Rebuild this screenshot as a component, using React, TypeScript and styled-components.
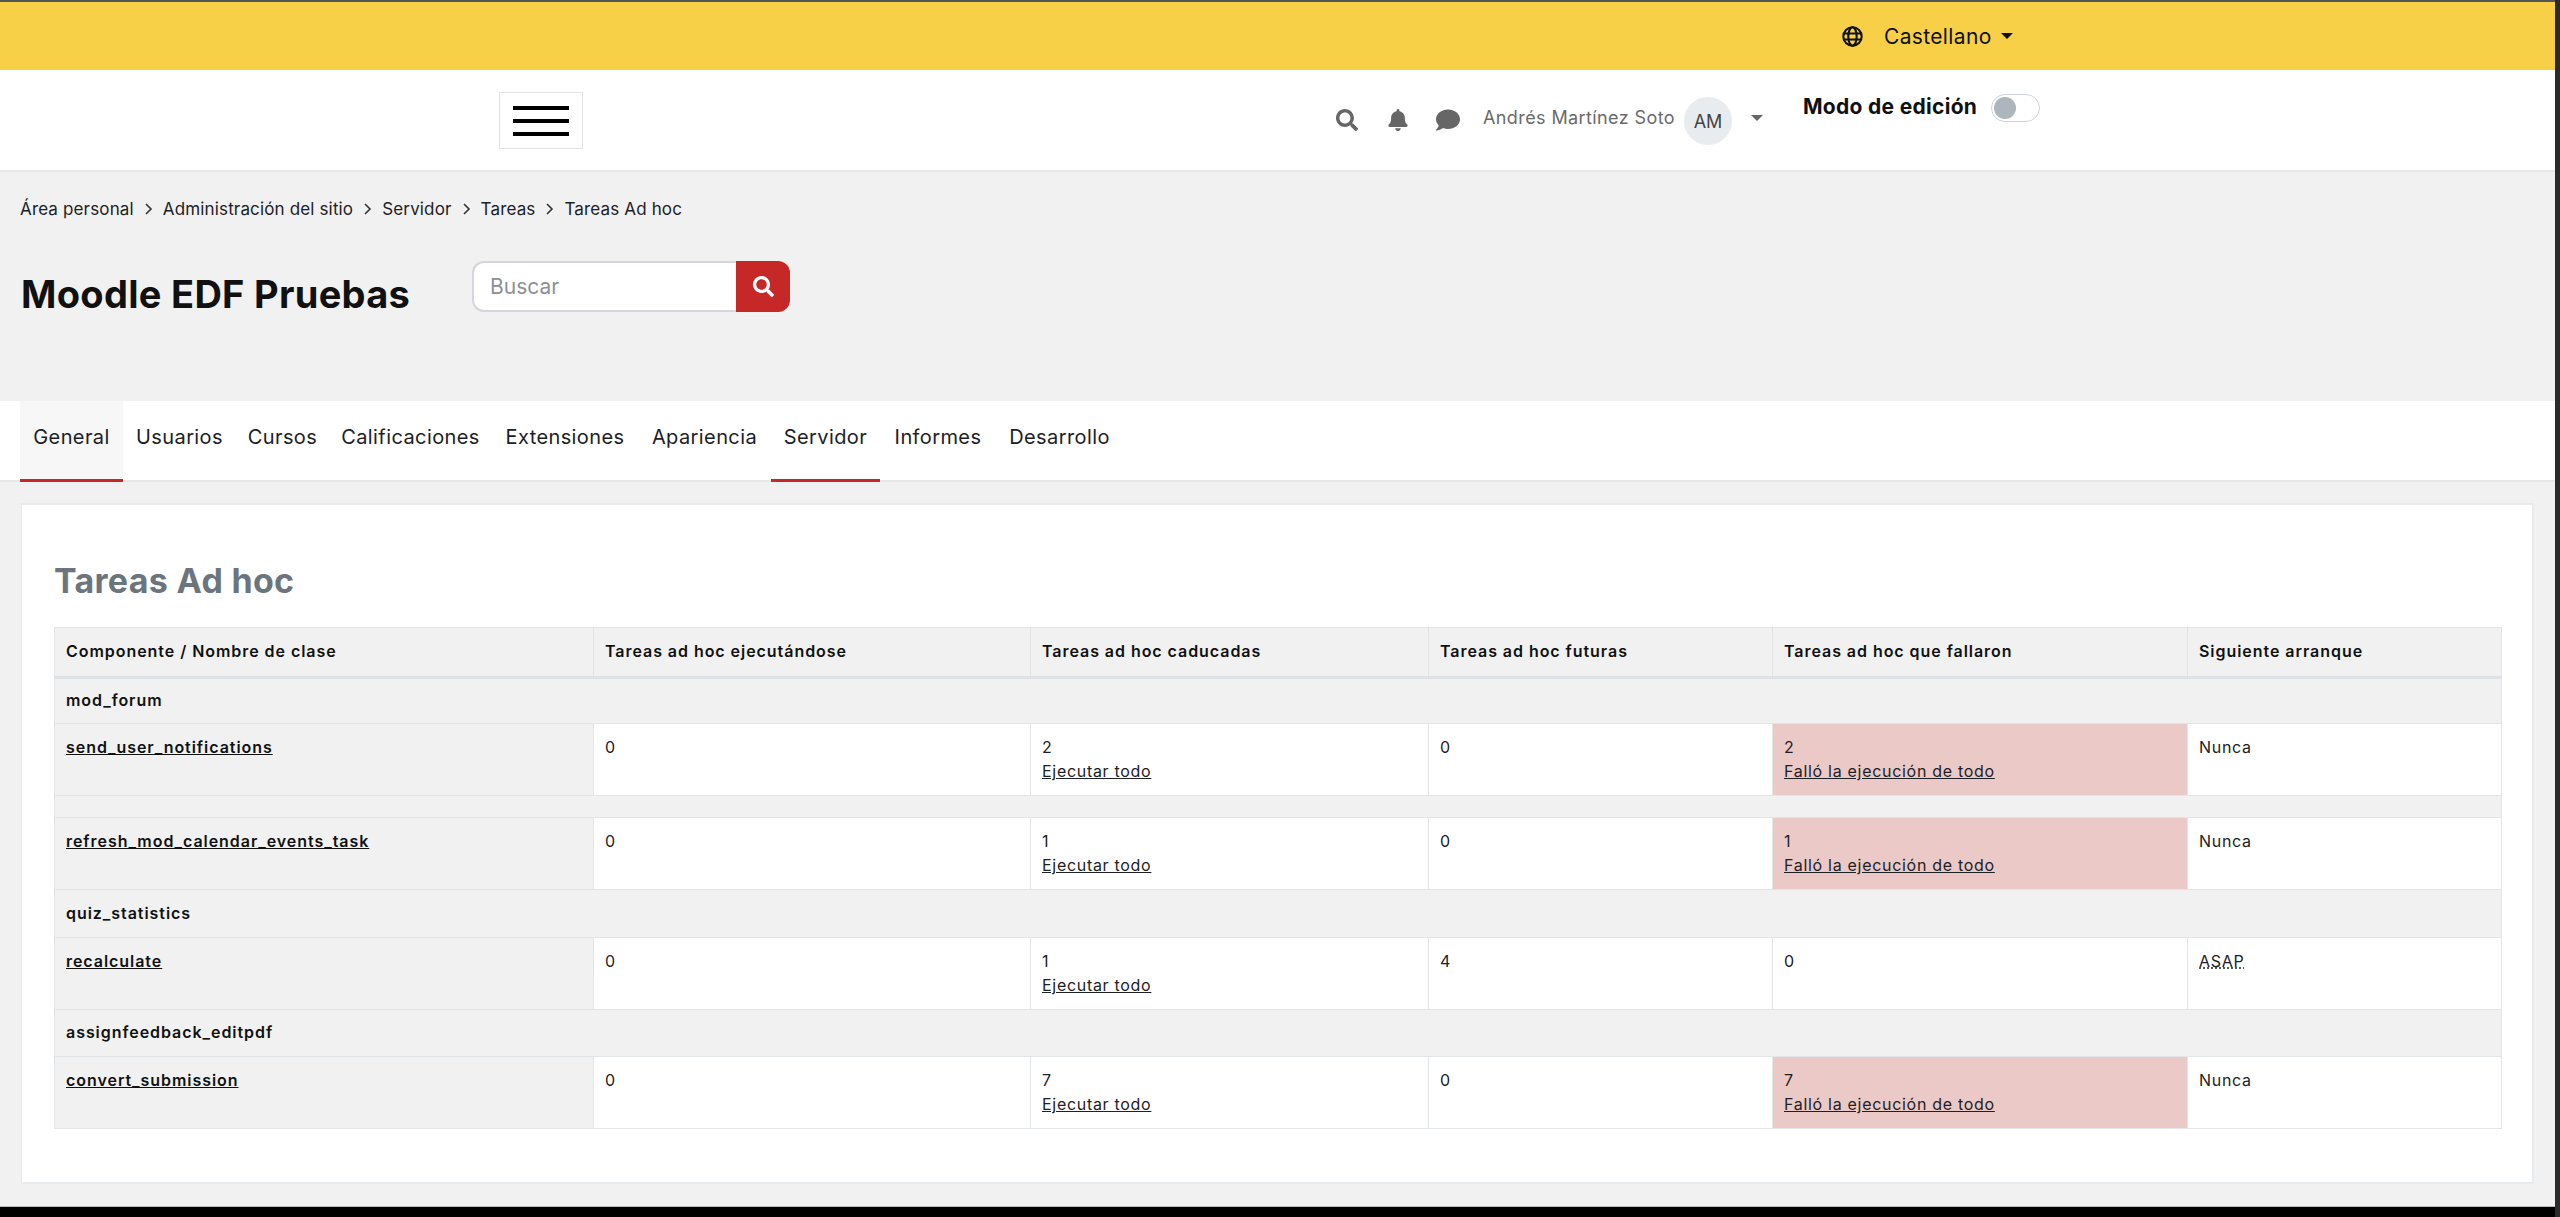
import React from "react";
import styled, { createGlobalStyle } from "styled-components";
import { FaSearch, FaBell, FaComment } from "react-icons/fa";

const Global = createGlobalStyle`
  html, body { margin: 0; padding: 0; background: #000; }
  body { font-family: Inter, "Liberation Sans", sans-serif; color: #1d2125; }
  * { box-sizing: border-box; }
`;

const Shell = styled.div`
  width: 2560px;
  height: 1217px;
  display: flex;
  background: #000;
  overflow: hidden;
`;
const Page = styled.div`
  flex: none;
  width: 2555px;
  height: 1207px;
  background: #f1f1f1;
  display: flex;
  flex-direction: column;
  border-top: 2px solid #555;
  border-bottom: 1px solid #bbb;
`;
const EdgeStrip = styled.div`
  flex: 1;
  background: #2b2b2b;
`;
const TopBar = styled.div`
  height: 68px;
  background: #f8d047;
  display: flex;
  align-items: center;
  padding-left: 1842px;
`;
const Language = styled.span`
  margin-left: 21px;
  font-size: 21px;
  letter-spacing: 0.35px;
  color: #111;
`;
const Caret = styled.span<{ $color?: string }>`
  display: inline-block;
  width: 0;
  height: 0;
  border-left: 6px solid transparent;
  border-right: 6px solid transparent;
  border-top: 6px solid ${(p) => p.$color || "#111"};
`;
const LangCaret = styled(Caret)`
  margin-left: 9px;
`;
const Header = styled.div`
  height: 102px;
  background: #fff;
  border-bottom: 2px solid #e8e8e8;
  display: flex;
  align-items: flex-start;
  padding-left: 499px;
`;
const Burger = styled.button`
  width: 84px;
  height: 57px;
  margin-top: 22px;
  padding: 0;
  background: #fff;
  border: 1px solid #e2e2e2;
  display: flex;
  flex-direction: column;
  align-items: center;
  justify-content: center;
  gap: 9px;
`;
const BurgerLine = styled.span`
  width: 56px;
  height: 4px;
  background: #000;
`;
const IconSlot = styled.span<{ $left: number }>`
  margin-left: ${(p) => p.$left}px;
  margin-top: 38px;
  height: 24px;
  display: flex;
  align-items: center;
  color: #666;
`;
const UserName = styled.span`
  margin-left: 23px;
  margin-top: 36px;
  width: 196px;
  font-size: 18px;
  letter-spacing: 0.4px;
  line-height: 24px;
  color: #6a6a6a;
  white-space: nowrap;
`;
const Avatar = styled.span`
  width: 48px;
  height: 48px;
  margin-left: 5px;
  margin-top: 27px;
  border-radius: 50%;
  background: #e9ecef;
  color: #444;
  font-size: 18px;
  display: flex;
  align-items: center;
  justify-content: center;
`;
const UserCaret = styled(Caret)`
  margin-left: 19px;
  margin-top: 45px;
`;
const EditLabel = styled.span`
  margin-left: 40px;
  margin-top: 23px;
  width: 177px;
  font-size: 21px;
  letter-spacing: 0.3px;
  line-height: 28px;
  font-weight: 700;
  color: #111;
  white-space: nowrap;
`;
const Toggle = styled.span`
  width: 49px;
  height: 28px;
  margin-left: 11px;
  margin-top: 24px;
  border: 1px solid #ced4da;
  border-radius: 14px;
  background: #fff;
  display: flex;
  align-items: center;
  padding-left: 2px;
`;
const Thumb = styled.span`
  width: 22px;
  height: 22px;
  border-radius: 50%;
  background: #adb5bd;
`;
const Hero = styled.div`
  height: 229px;
  padding: 27px 20px 0;
`;
const Crumbs = styled.div`
  display: flex;
  align-items: center;
  height: 20px;
  font-size: 17px;
  letter-spacing: 0.15px;
  color: #1d2125;
  white-space: nowrap;
`;
const CrumbSep = styled.svg`
  width: 9px;
  height: 14px;
  margin: 0 10px 0 10px;
  fill: none;
  stroke: #333;
  stroke-width: 1.6;
`;
const TitleRow = styled.div`
  display: flex;
  align-items: flex-start;
  margin-top: 42px;
`;
const SiteTitle = styled.h1`
  margin: 11px 0 0 1px;
  width: 451px;
  font-size: 38px;
  letter-spacing: 0.3px;
  line-height: 44px;
  font-weight: 700;
  color: #111;
  white-space: nowrap;
`;
const SearchBox = styled.div`
  width: 318px;
  height: 51px;
  display: flex;
`;
const SearchInput = styled.div`
  flex: 1;
  background: #fff;
  border: 2px solid #d3d6da;
  border-right: none;
  border-radius: 12px 0 0 12px;
  padding-left: 16px;
  display: flex;
  align-items: center;
  font-size: 21px;
  color: #8b9096;
`;
const SearchButton = styled.div`
  width: 54px;
  background: #c62828;
  border-radius: 0 12px 12px 0;
  color: #fff;
  display: flex;
  align-items: center;
  justify-content: center;
`;
const Tabs = styled.nav`
  height: 81px;
  background: #fff;
  border-bottom: 2px solid #e8e8e8;
  padding-left: 20px;
  display: flex;
`;
const Tab = styled.div<{ $width: number; $active?: boolean; $underline?: boolean }>`
  width: ${(p) => p.$width}px;
  height: 81px;
  font-size: 20px;
  letter-spacing: 0.4px;
  line-height: 73px;
  text-align: center;
  color: #1d2125;
  white-space: nowrap;
  background: ${(p) => (p.$active ? "#f7f7f7" : "transparent")};
  border-bottom: 3px solid ${(p) => (p.$underline ? "#c62828" : "transparent")};
`;
const Card = styled.section`
  margin: 21px 21px 0 21px;
  height: 681px;
  background: #fff;
  border: 2px solid #e8ebee;
  border-left-width: 1px;
  padding: 0 31px 0 32px;
`;
const Heading = styled.h2`
  margin: 54px 0 0;
  height: 68px;
  font-size: 34px;
  letter-spacing: 0.3px;
  line-height: 44px;
  font-weight: 700;
  color: #6c757d;
`;
const Table = styled.table`
  width: 2447px;
  table-layout: fixed;
  border-collapse: collapse;
  font-size: 16px;
  letter-spacing: 0.7px;
  line-height: 24px;
`;
const HeadCell = styled.th`
  height: 50px;
  padding: 0 11px 2px;
  background: #f1f1f1;
  border: 1px solid #e2e5e8;
  border-bottom: 3px solid #dee2e6;
  text-align: left;
  font-weight: 600;
  letter-spacing: 0.95px;
  color: #111;
  white-space: nowrap;
`;
const GroupCell = styled.td<{ $h: number }>`
  height: ${(p) => p.$h}px;
  padding: 0 11px 2px;
  background: #f1f1f1;
  border: 1px solid #e2e5e8;
  font-weight: 600;
  letter-spacing: 0.95px;
  color: #111;
`;
const Cell = styled.td<{ $failed?: boolean }>`
  height: 72px;
  padding: 11px 11px 0;
  vertical-align: top;
  background: ${(p) => (p.$failed ? "#ebc9c7" : "#fff")};
  border: 1px solid #e2e5e8;
  color: #1d2125;
`;
const ClassCell = styled(Cell)`
  background: #f1f1f1;
  font-weight: 600;
  letter-spacing: 0.95px;
`;
const ClassLink = styled.a`
  color: #111;
  text-decoration: underline;
`;
const RunLink = styled.a`
  display: block;
  color: #1d2125;
  text-decoration: underline;
`;
const Abbr = styled.abbr`
  text-decoration: underline dotted;
`;

const Globe = () => (
  <svg width="21" height="21" viewBox="0 0 24 24" fill="none" stroke="#111" strokeWidth="2.4">
    <circle cx="12" cy="12" r="10.5" />
    <ellipse cx="12" cy="12" rx="4.8" ry="10.5" />
    <path d="M1.5 8.5h21M1.5 15.5h21" />
  </svg>
);

const crumbs = ["Área personal", "Administración del sitio", "Servidor", "Tareas", "Tareas Ad hoc"];
const tabs = [
  { label: "General", width: 103 },
  { label: "Usuarios", width: 113 },
  { label: "Cursos", width: 93 },
  { label: "Calificaciones", width: 163 },
  { label: "Extensiones", width: 146 },
  { label: "Apariencia", width: 133 },
  { label: "Servidor", width: 109 },
  { label: "Informes", width: 116 },
  { label: "Desarrollo", width: 127 },
];
const cols = [539, 437, 398, 344, 415, 314];
const heads = [
  "Componente / Nombre de clase",
  "Tareas ad hoc ejecutándose",
  "Tareas ad hoc caducadas",
  "Tareas ad hoc futuras",
  "Tareas ad hoc que fallaron",
  "Siguiente arranque",
];

type Row = { name: string; running: number; due: number; future: number; failed: number; next: string };
const groups: { title: string; h: number; row: Row }[] = [
  { title: "mod_forum", h: 46, row: { name: "send_user_notifications", running: 0, due: 2, future: 0, failed: 2, next: "Nunca" } },
  { title: "", h: 22, row: { name: "refresh_mod_calendar_events_task", running: 0, due: 1, future: 0, failed: 1, next: "Nunca" } },
  { title: "quiz_statistics", h: 48, row: { name: "recalculate", running: 0, due: 1, future: 4, failed: 0, next: "ASAP" } },
  { title: "assignfeedback_editpdf", h: 47, row: { name: "convert_submission", running: 0, due: 7, future: 0, failed: 7, next: "Nunca" } },
];

export default function App() {
  return (
    <Shell>
      <Global />
      <Page>
        <TopBar>
          <Globe />
          <Language>Castellano</Language>
          <LangCaret />
        </TopBar>
        <Header>
          <Burger aria-label="Menú">
            <BurgerLine />
            <BurgerLine />
            <BurgerLine />
          </Burger>
          <IconSlot $left={753}><FaSearch size={22} /></IconSlot>
          <IconSlot $left={29}><FaBell size={22} /></IconSlot>
          <IconSlot $left={27}><FaComment size={24} /></IconSlot>
          <UserName>Andrés Martínez Soto</UserName>
          <Avatar>AM</Avatar>
          <UserCaret $color="#666" />
          <EditLabel>Modo de edición</EditLabel>
          <Toggle><Thumb /></Toggle>
        </Header>
        <Hero>
          <Crumbs>
            {crumbs.map((c, i) => (
              <React.Fragment key={c}>
                {i > 0 && (
                  <CrumbSep viewBox="0 0 9 14"><path d="M2 2l5 5-5 5" /></CrumbSep>
                )}
                <span>{c}</span>
              </React.Fragment>
            ))}
          </Crumbs>
          <TitleRow>
            <SiteTitle>Moodle EDF Pruebas</SiteTitle>
            <SearchBox>
              <SearchInput>Buscar</SearchInput>
              <SearchButton><FaSearch size={21} /></SearchButton>
            </SearchBox>
          </TitleRow>
        </Hero>
        <Tabs>
          {tabs.map((t) => (
            <Tab
              key={t.label}
              $width={t.width}
              $active={t.label === "General"}
              $underline={t.label === "General" || t.label === "Servidor"}
            >
              {t.label}
            </Tab>
          ))}
        </Tabs>
        <Card>
          <Heading>Tareas Ad hoc</Heading>
          <Table>
            <colgroup>
              {cols.map((w, i) => <col key={i} style={{ width: w }} />)}
            </colgroup>
            <thead>
              <tr>{heads.map((h) => <HeadCell key={h}>{h}</HeadCell>)}</tr>
            </thead>
            <tbody>
              {groups.map((g) => (
                <React.Fragment key={g.row.name}>
                  <tr><GroupCell colSpan={6} $h={g.h}>{g.title}</GroupCell></tr>
                  <tr>
                    <ClassCell><ClassLink>{g.row.name}</ClassLink></ClassCell>
                    <Cell>{g.row.running}</Cell>
                    <Cell>{g.row.due}<RunLink>Ejecutar todo</RunLink></Cell>
                    <Cell>{g.row.future}</Cell>
                    <Cell $failed={g.row.failed > 0}>
                      {g.row.failed}
                      {g.row.failed > 0 && <RunLink>Falló la ejecución de todo</RunLink>}
                    </Cell>
                    <Cell>{g.row.next === "ASAP" ? <Abbr>ASAP</Abbr> : g.row.next}</Cell>
                  </tr>
                </React.Fragment>
              ))}
            </tbody>
          </Table>
        </Card>
      </Page>
      <EdgeStrip />
    </Shell>
  );
}
